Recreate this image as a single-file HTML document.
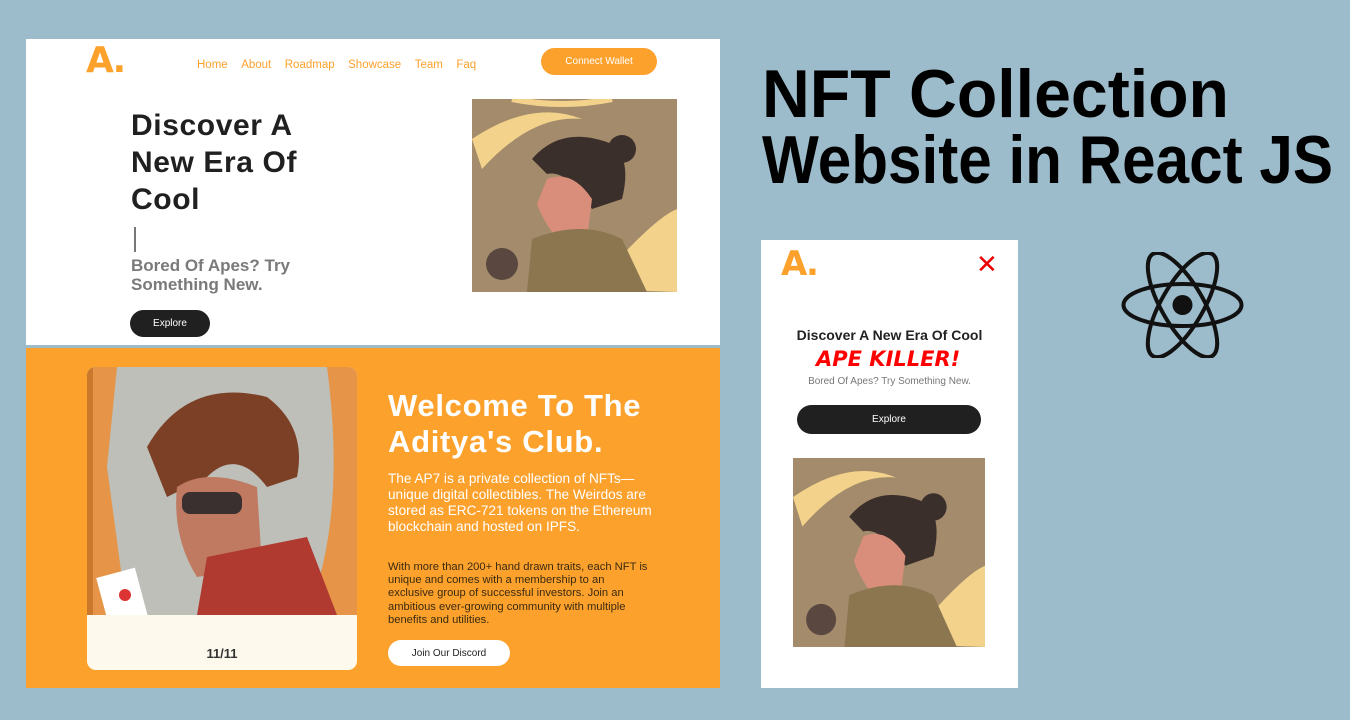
<!DOCTYPE html>
<html><head><meta charset="utf-8"><style>
*{margin:0;padding:0;box-sizing:border-box}
body{width:1350px;height:720px;background:#9dbccb;position:relative;overflow:hidden;font-family:"Liberation Sans",sans-serif}
.abs{position:absolute}
.logo{font-family:"DejaVu Sans","Liberation Sans",sans-serif;font-weight:bold;color:#fda12d}
.nav a{color:#fda12d;font-size:11.5px;text-decoration:none;margin-right:13.5px}
.btn{position:absolute;border-radius:16px;font-size:10px;display:flex;align-items:center;justify-content:center}
</style></head><body>
<div class="abs" style="left:26px;top:39px;width:694px;height:306px;background:#fff"></div>
<div class="abs logo" style="left:86px;top:40px;font-size:36px;letter-spacing:-2px">A.</div>
<div class="abs nav" style="left:197px;top:55px"><a>Home</a><a>About</a><a>Roadmap</a><a>Showcase</a><a>Team</a><a>Faq</a></div>
<div class="btn" style="left:541px;top:48px;width:116px;height:27px;background:#fda12d;color:#fff">Connect Wallet</div>
<div class="abs" style="left:131px;top:107px;font-size:30px;font-weight:bold;color:#202020;line-height:37px;letter-spacing:0.6px">Discover A<br>New Era Of<br>Cool</div>
<div class="abs" style="left:134px;top:227px;width:2px;height:25px;background:#777"></div>
<div class="abs" style="left:131px;top:256px;font-size:17px;font-weight:bold;color:#7a7a7a;line-height:19px">Bored Of Apes? Try<br>Something New.</div>
<div class="btn" style="left:130px;top:310px;width:80px;height:27px;background:#202020;color:#fff">Explore</div>
<svg class="abs" style="left:472px;top:99px" width="205" height="193" viewBox="0 0 205 193">
<rect width="205" height="193" fill="#a38b6c"/>
<path d="M0 40 Q60 0 110 20 Q60 15 10 70Z" fill="#f3d38c"/>
<path d="M120 190 Q180 120 205 110 L205 193Z" fill="#f3d38c"/>
<path d="M40 0 Q90 10 140 0" stroke="#f3d38c" stroke-width="6" fill="none"/>
<path d="M60 60 Q90 25 140 45 Q160 60 150 100 L120 110 Q95 70 75 75Z" fill="#3a2f2a"/>
<circle cx="150" cy="50" r="14" fill="#3a2f2a"/>
<path d="M75 80 Q100 70 120 100 L115 140 L85 140 Q70 120 65 105Z" fill="#d88e7a"/>
<path d="M60 140 Q110 120 150 140 L175 193 L55 193Z" fill="#8b7650"/>
<circle cx="30" cy="165" r="16" fill="#5a4840"/>
</svg>
<div class="abs" style="left:26px;top:348px;width:694px;height:340px;background:#fda12d"></div>
<div class="abs" style="left:87px;top:367px;width:270px;height:303px;background:#fdf9ec;border-radius:9px;overflow:hidden">
<svg width="270" height="248" viewBox="0 0 270 248">
<rect width="270" height="248" fill="#bdbfb8"/>
<rect width="6" height="248" fill="#333"/>
<path d="M0 0 L30 0 L20 100 L40 248 L0 248Z" fill="#f08a2a" opacity=".8"/>
<path d="M240 0 L270 0 L270 248 L220 248 Q260 150 240 0Z" fill="#f08a2a" opacity=".8"/>
<path d="M60 80 Q100 10 180 30 Q220 60 210 110 L180 120 Q150 80 120 110 L80 130Z" fill="#7c4026"/>
<path d="M90 120 Q120 100 170 120 L175 200 L110 210 Q85 170 90 120Z" fill="#c07a62"/>
<rect x="95" y="125" width="60" height="22" rx="8" fill="#3a3030"/>
<path d="M120 190 L220 170 L250 248 L110 248Z" fill="#b03a30"/>
<rect x="15" y="205" width="40" height="55" fill="#fff" transform="rotate(-15 35 230)"/>
<circle cx="38" cy="228" r="6" fill="#d33"/>
</svg>
<div style="text-align:center;font-size:13px;font-weight:bold;color:#333;margin-top:26px">11/11</div>
</div>
<div class="abs" style="left:388px;top:388px;font-size:31px;font-weight:bold;color:#fff;line-height:36px;letter-spacing:0.7px">Welcome To The<br>Aditya's Club.</div>
<div class="abs" style="left:388px;top:471px;font-size:13.6px;color:#fff;line-height:16px;width:270px">The AP7 is a private collection of NFTs—unique digital collectibles. The Weirdos are stored as ERC-721 tokens on the Ethereum blockchain and hosted on IPFS.</div>
<div class="abs" style="left:388px;top:561px;font-size:11.2px;color:#3a2a10;line-height:13.2px;width:262px">With more than 200+ hand drawn traits, each NFT is unique and comes with a membership to an exclusive group of successful investors. Join an ambitious ever-growing community with multiple benefits and utilities.</div>
<div class="btn" style="left:388px;top:640px;width:122px;height:26px;background:#fff;color:#222">Join Our Discord</div>
<svg class="abs" style="left:760px;top:50px" width="580" height="150">
<text x="2" y="67" textLength="467" lengthAdjust="spacingAndGlyphs" font-family="Liberation Sans" font-weight="bold" font-size="68" fill="#000">NFT Collection</text>
<text x="2" y="133" textLength="571" lengthAdjust="spacingAndGlyphs" font-family="Liberation Sans" font-weight="bold" font-size="68" fill="#000">Website in React JS</text>
</svg>
<div class="abs" style="left:761px;top:240px;width:257px;height:448px;background:#fff"></div>
<div class="abs logo" style="left:781px;top:244px;font-size:34px;letter-spacing:-2px">A.</div>
<div class="abs" style="left:976px;top:249px;color:#e00;font-size:26px;line-height:30px">✕</div>
<div class="abs" style="left:761px;top:327px;width:257px;text-align:center;font-size:14px;font-weight:bold;color:#222">Discover A New Era Of Cool</div>
<div class="abs" style="left:816px;top:347px;font-size:21px;font-weight:bold;color:#f00;font-style:italic;font-family:'DejaVu Sans',sans-serif">APE KILLER!</div>
<div class="abs" style="left:761px;top:376px;width:257px;text-align:center;font-size:10px;color:#777">Bored Of Apes? Try Something New.</div>
<div class="btn" style="left:797px;top:405px;width:184px;height:29px;background:#202020;color:#fff">Explore</div>
<svg class="abs" style="left:793px;top:458px" width="192" height="189" viewBox="0 0 205 193" preserveAspectRatio="none">
<rect width="205" height="193" fill="#a38b6c"/>
<path d="M0 40 Q60 0 110 20 Q60 15 10 70Z" fill="#f3d38c"/>
<path d="M120 190 Q180 120 205 110 L205 193Z" fill="#f3d38c"/>
<path d="M60 60 Q90 25 140 45 Q160 60 150 100 L120 110 Q95 70 75 75Z" fill="#3a2f2a"/>
<circle cx="150" cy="50" r="14" fill="#3a2f2a"/>
<path d="M75 80 Q100 70 120 100 L115 140 L85 140 Q70 120 65 105Z" fill="#d88e7a"/>
<path d="M60 140 Q110 120 150 140 L175 193 L55 193Z" fill="#8b7650"/>
<circle cx="30" cy="165" r="16" fill="#5a4840"/>
</svg>
<svg class="abs" style="left:1120px;top:252px" width="125" height="106" viewBox="-62.5 -53 125 106">
<g fill="none" stroke="#111" stroke-width="4">
<ellipse rx="59" ry="21"/>
<ellipse rx="59" ry="21" transform="rotate(60)"/>
<ellipse rx="59" ry="21" transform="rotate(-60)"/>
</g>
<circle r="10" fill="#111"/>
</svg>
</body></html>
